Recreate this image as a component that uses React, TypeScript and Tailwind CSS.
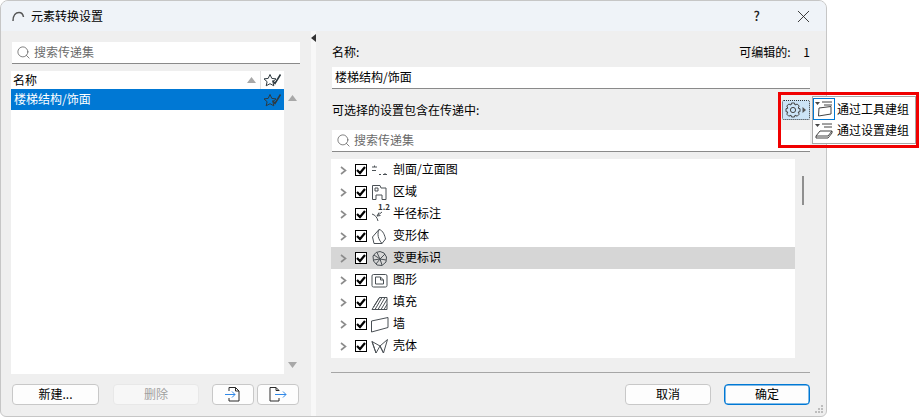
import React from 'react';
import { Search, X } from 'lucide-react';

const FONT = '[font-family:"Noto_Sans_CJK_SC","Liberation_Sans",sans-serif]';

function StarCheck() {
  return (
    <svg width="19" height="14" viewBox="0 0 19 14" fill="none" stroke="#2f3a40" strokeWidth="1">
      <path d="M7 1.5 8.8 5.4 13 5.9 9.9 8.7 10.8 12.8 7 10.7 3.2 12.8 4.1 8.7 1 5.9 5.2 5.4Z" />
      <path d="M9.5 7.5 12 10.5 17.5 1.5" strokeWidth="1.6" />
    </svg>
  );
}

function SearchBox({ className }: { className: string }) {
  return (
    <div className={`flex h-[22px] items-center bg-white border-b border-[#8a8a8a] pl-[4px] pb-[1px] text-[#6b6b6b] ${className}`}>
      <Search className="h-[15px] w-[15px] text-[#666]" strokeWidth={1.3} />
      <span className="ml-[3px]">搜索传递集</span>
    </div>
  );
}

function Btn({ children, className = '' }: { children: React.ReactNode; className?: string }) {
  return <div className={`flex h-[21px] items-center justify-center rounded-[4px] border pb-[1px] ${className}`}>{children}</div>;
}

const NORMAL = 'border-[#c8c8c8] bg-[#fdfdfd] text-black';

const icons: Record<string, React.ReactNode> = {
  section: (
    <>
      <path d="M1 5H6M3.5 3.5V5M1 8.5H5" />
      <path d="M8 12.5H10M12 12.5H16M14 12.5V11" />
    </>
  ),
  zone: <path d="M1.5 1.5H9L10 4H15V15.5H11V11H5V15.5H1.5ZM4 4H7V7H4Z" />,
  radial: (
    <>
      <path d="M1 8C4 9 6 11 7 15" />
      <path d="M6 10 11 6M6 10 8 6.5M6 10 9.5 9.5" />
    </>
  ),
  morph: <path d="M3 15.5 1.5 9 8 1.5C12 2 14 8 14.5 11L11 15.5ZM8 1.5C6 6 7 11 11 15.5" />,
  change: (
    <>
      <path d="M2 6 5 2.5 9 1.5 13 3 15.5 7 15 12 11 15.5 6 15 2.5 11Z" />
      <path d="M3 5 9 9 14 4M2.5 10 9 9 11 15M6 2.5 9 9M9 9 15 10M5 14 9 9" />
    </>
  ),
  figure: (
    <>
      <rect x="1" y="2.5" width="15" height="12.5" rx="1.5" />
      <path d="M4.5 12V5H9.5L12.5 8V12ZM9.5 5V8H12.5" />
    </>
  ),
  fill: (
    <>
      <path d="M1 15.5 8.5 3.5H16V15.5Z" />
      <path d="M4 15.5 11 3.5M7 15.5 14 3.5M10 15.5 16 5.5M13 15.5 16 10.5M2.5 13 8.5 3.5" />
    </>
  ),
  wall: <path d="M0.5 5 17 1.5V11.5L0.5 16Z" />,
  shell: <path d="M1 3.5 9 8 16.5 1.5 12.5 15 9 8 5 15ZM5 15 1 3.5M9 8 12.5 15" />,
};

const rows = [
  { name: '剖面/立面图', icon: 'section' },
  { name: '区域', icon: 'zone' },
  { name: '半径标注', icon: 'radial', sup: true },
  { name: '变形体', icon: 'morph' },
  { name: '变更标识', icon: 'change', active: true },
  { name: '图形', icon: 'figure' },
  { name: '填充', icon: 'fill' },
  { name: '墙', icon: 'wall' },
  { name: '壳体', icon: 'shell' },
];

function TreeRow({ name, icon, active, sup }: { name: string; icon: string; active?: boolean; sup?: boolean }) {
  return (
    <div className={`flex h-[22px] items-center pl-[9px] ${active ? 'bg-[#d6d6d6]' : ''}`}>
      <svg width="7" height="9" viewBox="0 0 7 9" fill="none" stroke="#8c8c8c" strokeWidth="1.6">
        <path d="M1 1 5.5 4.5 1 8" />
      </svg>
      <div className="ml-[8px] flex h-[12px] w-[12px] items-center justify-center border border-black bg-white">
        <svg width="10" height="10" viewBox="0 0 10 10" fill="none" stroke="#000" strokeWidth="2.2">
          <path d="M1 5 4 8 9 2" />
        </svg>
      </div>
      <div className="relative ml-[4px] h-[17px] w-[19px]">
        <svg width="18" height="17" viewBox="0 0 18 17" fill="none" stroke="#4a5055" strokeWidth="1">
          {icons[icon]}
        </svg>
        {sup && <span className="absolute left-[7px] top-[-4px] text-[8px] font-bold leading-[10px] text-[#333]">1.2</span>}
      </div>
      <span className="ml-[3px] pb-[2px] text-black">{name}</span>
    </div>
  );
}

function ToolGroupIcon({ kind }: { kind: 'tool' | 'setting' }) {
  return (
    <svg width="20" height="18" viewBox="0 0 20 18" fill="none" stroke="#444" strokeWidth="1">
      <path d="M1 2H6L3.5 5Z" fill="#444" stroke="none" />
      <path d="M8 2H18M10 5H18" />
      {kind === 'tool' ? <path d="M5 8 17 6.5V14L4.5 16Z" /> : <path d="M6 9H18L14 14H2ZM2 14V16H14L18 11V9" />}
    </svg>
  );
}

export default function App() {
  return (
    <div className={`relative flex h-[417px] w-[920px] bg-white text-[12px] leading-[16px] text-black ${FONT}`}>
      {/* dialog */}
      <div className="flex h-[417px] w-[827px] flex-col overflow-hidden rounded-t-[8px] rounded-b-[6px] border border-[#c6c6c6] bg-[#efefef]">
        <div className="flex h-[30px] shrink-0 items-center bg-[#eff3f8] pl-[10px] pr-[12px]">
          <svg width="15" height="15" viewBox="0 0 15 15" fill="none" stroke="#555" strokeWidth="1.5">
            <path d="M2 12C2 6 5 3.5 8 3.5 10.5 3.5 12 5 12.5 8" />
          </svg>
          <span className="ml-[5px] text-black">元素转换设置</span>
          <span className="ml-auto mr-[33px] text-[13px] font-medium text-[#222]">?</span>
          <X className="h-[21px] w-[21px] text-[#222]" strokeWidth={1} />
        </div>

        <div className="flex min-h-0 flex-1">
          {/* left panel */}
          <div className="flex w-[310px] shrink-0 flex-col pl-[10px] pt-[11px]">
            <SearchBox className="ml-[1px] w-[288px]" />
            <div className="mt-[7px] flex h-[303px] w-[290px]">
              <div className="flex h-full w-[273px] flex-col bg-white">
                <div className="flex h-[18px] shrink-0 items-center pl-[2px]">
                  <span className="pb-[1px]">名称</span>
                  <svg className="ml-auto mr-[2px]" width="9" height="6" viewBox="0 0 9 6" fill="#a8a8a8"><path d="M0 6 4.5 0 9 6Z" /></svg>
                  <div className="ml-[2px] mr-[1px] flex h-full w-[23px] items-center justify-center border-l border-[#e2e2e2]"><StarCheck /></div>
                </div>
                <div className="flex h-[21px] shrink-0 items-center justify-between bg-[#0078d4] pl-[3px] pr-[2px] text-white">
                  <span className="pb-[2px]">楼梯结构/饰面</span>
                  <StarCheck />
                </div>
              </div>
              <div className="flex w-[17px] flex-col items-center justify-between pb-[6px] pt-[24px]">
                <svg width="9" height="6" viewBox="0 0 9 6" fill="#a8a8a8"><path d="M0 6 4.5 0 9 6Z" /></svg>
                <svg width="9" height="6" viewBox="0 0 9 6" fill="#a8a8a8"><path d="M0 0 4.5 6 9 0Z" /></svg>
              </div>
            </div>
            <div className="mt-[10px] flex">
              <Btn className={`ml-[1px] w-[87px] ${NORMAL}`}>新建...</Btn>
              <Btn className="ml-[14px] w-[86px] border-[#e8e8e8] bg-[#f7f7f7] text-[#a0a0a0]">删除</Btn>
              <Btn className={`ml-[13px] w-[42px] ${NORMAL}`}>
                <svg width="18" height="16" viewBox="0 0 18 16" fill="none" stroke="#2a2a2a">
                  <path d="M5 5V1.5H11.5L15 5V15H5V12M11.5 1.5V5H15" />
                  <path d="M1 8.5H11M8 5.5 11 8.5 8 11.5" stroke="#2f88e8" />
                </svg>
              </Btn>
              <Btn className={`ml-[3px] w-[42px] ${NORMAL}`}>
                <svg width="20" height="16" viewBox="0 0 20 16" fill="none" stroke="#2a2a2a">
                  <path d="M11 12V15H2V1.5H8L11 4.5V5M8 1.5V4.5H11" />
                  <path d="M7 8.5H18M15 5.5 18 8.5 15 11.5" stroke="#2f88e8" />
                </svg>
              </Btn>
            </div>
          </div>

          {/* splitter */}
          <div className="w-[5px] shrink-0 bg-[#f8f8f8] pt-[3px]">
            <svg width="5" height="8" viewBox="0 0 5 8" fill="#333"><path d="M5 0V8L0 4Z" /></svg>
          </div>

          {/* right panel */}
          <div className="flex min-w-0 flex-1 flex-col pl-[15px] pr-[16px] pt-[13px]">
            <div className="flex h-[16px] items-center justify-between pl-[1px]">
              <span>名称:</span>
              <span>
                可编辑的: <span className="ml-[10px]">1</span>
              </span>
            </div>
            <div className="ml-[1px] mt-[7px] flex h-[22px] items-center border-b border-[#8a8a8a] bg-white pb-[2px] pl-[3px]">楼梯结构/饰面</div>
            <div className="mt-[13px] h-[17px] pl-[1px]">可选择的设置包含在传递中:</div>
            <SearchBox className="ml-[1px] mt-[11px]" />
            <div className="mt-[7px] flex">
              <div className="h-[199px] w-[464px] bg-white">
                {rows.map((r) => (
                  <TreeRow key={r.name} {...r} />
                ))}
              </div>
              <div className="ml-[7px] mt-[17px] h-[29px] w-[2px] bg-[#8f8f8f]" />
            </div>
            <div className="mt-[14px] h-px bg-[#a6a6a6]" />
            <div className="mt-[11px] flex justify-end">
              <Btn className={`w-[86px] ${NORMAL}`}>取消</Btn>
              <Btn className="ml-[13px] w-[86px] border-[#0078d4] bg-[#fdfdfd] shadow-[inset_0_0_0_0.5px_#0078d4]">确定</Btn>
            </div>
          </div>
        </div>
      </div>

      {/* gear menu callout */}
      <div className="absolute left-[778px] top-[92px] h-[56px] w-[141px] border-[3px] border-[#f00000] pl-[1px] pt-[5px]">
        <div className="flex h-[20px] w-[28px] items-center rounded-[2px] border border-dotted border-[#333] bg-[#cce4f7] pl-[2px]">
          <svg width="22" height="16" viewBox="0 0 22 16" fill="none" stroke="#444" strokeWidth="1">
            <circle cx="8" cy="8" r="2.6" />
            <path d="M6.5 1H9.5L10 3 12.2 2 14.2 4 13.2 6.2 15 6.7V9.7L13.2 10 14.2 12.2 12.2 14.2 10 13.2 9.5 15H6.5L6 13.2 3.8 14.2 1.8 12.2 2.8 10 1 9.7V6.7L2.8 6.2 1.8 4 3.8 2 6 3Z" />
            <path d="M17.5 5 21 8 17.5 11Z" fill="#555" stroke="none" />
          </svg>
        </div>
        <div className="absolute left-[31px] top-[1px] h-[48px] w-[104px] border border-[#a8a8a8] bg-white py-[1px]">
          <div className="flex h-[22px] items-center">
            <div className="flex h-[22px] w-[22px] items-center justify-center border border-[#0078d4]">
              <ToolGroupIcon kind="tool" />
            </div>
            <span className="ml-[2px] pb-[1px]">通过工具建组</span>
          </div>
          <div className="flex h-[21px] items-center">
            <div className="flex h-[21px] w-[22px] items-center justify-center">
              <ToolGroupIcon kind="setting" />
            </div>
            <span className="ml-[2px] pb-[1px]">通过设置建组</span>
          </div>
        </div>
      </div>

      {/* resize grip */}
      <svg className="absolute left-[815px] top-[405px]" width="9" height="9" viewBox="0 0 9 9" fill="#bdbdbd">
        <rect x="6" y="0" width="2" height="2" />
        <rect x="3" y="3" width="2" height="2" />
        <rect x="6" y="3" width="2" height="2" />
        <rect x="0" y="6" width="2" height="2" />
        <rect x="3" y="6" width="2" height="2" />
        <rect x="6" y="6" width="2" height="2" />
      </svg>
    </div>
  );
}
